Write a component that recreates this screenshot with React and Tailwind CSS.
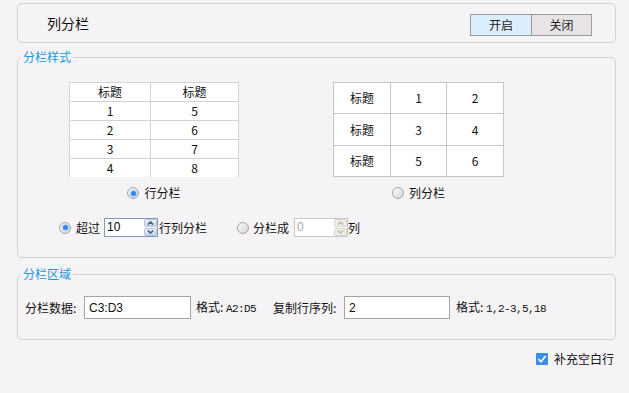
import React from 'react';

const font = { fontFamily: '"Noto Sans CJK SC", "Liberation Sans", sans-serif' };
const mono = { fontFamily: '"Liberation Mono", monospace' };

const Radio = ({ checked }) => (
  <span className="flex h-[12px] w-[12px] shrink-0 items-center justify-center rounded-full border border-[#a4a4a4] bg-linear-to-br from-[#fbfbfb] to-[#d6d6d6]">
    {checked && <span className="h-[5px] w-[5px] rounded-full bg-[#3586ea] shadow-[0_0_2px_1px_#a9cdf7]" />}
  </span>
);

const SpinBtn = ({ up, disabled }) => (
  <div
    className={`flex h-[8px] items-center justify-center rounded-[2px] border ${
      disabled ? 'border-[#d8d6cf] bg-[#eeede8]' : 'border-[#b3c3df] bg-linear-to-b from-[#eef3fc] to-[#c8d6ef]'
    }`}
  >
    <svg width="7" height="4" viewBox="0 0 7 4">
      <path
        d={up ? 'M0.8 3.6 L3.5 0.9 L6.2 3.6' : 'M0.8 0.4 L3.5 3.1 L6.2 0.4'}
        fill="none"
        stroke={disabled ? '#c4c2b8' : '#4a5f86'}
        strokeWidth="1.6"
      />
    </svg>
  </div>
);

const Spin = ({ value, disabled }) => (
  <div className={`flex h-[19px] w-[54px] border bg-white ${disabled ? 'border-[#cbc9bd]' : 'border-[#7f9db9]'}`}>
    <div
      className={`flex-1 pl-[2px] text-[12px] leading-[17px] ${disabled ? 'text-[#a8a8a8]' : 'text-black'}`}
      style={{ fontFamily: '"Liberation Sans", sans-serif' }}
    >
      {value}
    </div>
    <div className="flex w-[13px] flex-col justify-between">
      <SpinBtn up disabled={disabled} />
      <SpinBtn disabled={disabled} />
    </div>
  </div>
);

const Legend = ({ children }) => (
  <legend className="ml-[3px] px-[2px] text-[12px] leading-[16px] text-[#1a99db]">{children}</legend>
);

const RowTable = () => {
  const rows = [['标题', '标题'], ['1', '5'], ['2', '6'], ['3', '7'], ['4', '8']];
  return (
    <div className="w-[170px] border-x border-t border-[#d3d3d3] bg-white">
      {rows.map((r, i) => (
        <div
          key={i}
          className={`flex text-[12px] ${i === rows.length - 1 ? 'h-[18px]' : 'h-[19px] border-b border-[#d3d3d3]'}`}
        >
          <div className="flex w-[81px] items-center justify-center border-r border-[#d3d3d3]">{r[0]}</div>
          <div className="flex flex-1 items-center justify-center">{r[1]}</div>
        </div>
      ))}
    </div>
  );
};

const ColTable = () => {
  const rows = [
    ['1', '2', 'h-[31px]'],
    ['3', '4', 'h-[32px]'],
    ['5', '6', 'h-[31px]'],
  ];
  return (
    <div className="w-[171px] border-l border-t border-[#c6c6c6] bg-white">
      {rows.map((r, i) => (
        <div key={i} className={`flex text-[12px] ${r[2]}`}>
          <div className="flex w-[57px] items-center justify-center border-b border-r border-[#c6c6c6]">标题</div>
          <div className="flex w-[56px] items-center justify-center border-b border-r border-[#c6c6c6]">{r[0]}</div>
          <div className="flex w-[57px] items-center justify-center border-b border-r border-[#c6c6c6]">{r[1]}</div>
        </div>
      ))}
    </div>
  );
};

const App = () => {
  return (
    <div className="flex h-[393px] w-[629px] flex-col bg-[#f6f3f6] pl-[17px] pr-[13px] pt-[3px] text-[#111]" style={font}>
      <div className="flex h-[40px] items-center rounded-[5px] border border-[#d4d0d4] pl-[29px] pr-[23px]">
        <span className="text-[14px]">列分栏</span>
        <div className="ml-auto mt-[3px] flex h-[22px] border border-[#9c9a9c] text-[12px] text-[#222]">
          <div className="flex w-[60px] items-center justify-center bg-[#dbeefd]">开启</div>
          <div className="flex w-[60px] items-center justify-center border-l border-[#9c9a9c] bg-[#e7e3e7]">关闭</div>
        </div>
      </div>

      <fieldset className="mt-[6px] rounded-[5px] border border-[#d4d0d4] pb-[20px]">
        <Legend>分栏样式</Legend>
        <div className="flex gap-[94px] pl-[51px] pt-[17px]">
          <div className="flex w-[170px] flex-col items-center">
            <RowTable />
            <div className="mt-[8px] flex h-[16px] items-center gap-[5px] text-[12px]">
              <Radio checked />
              <span>行分栏</span>
            </div>
          </div>
          <div className="flex w-[171px] flex-col items-center">
            <ColTable />
            <div className="mt-[8px] flex h-[16px] items-center gap-[5px] text-[12px]">
              <Radio />
              <span>列分栏</span>
            </div>
          </div>
        </div>
        <div className="mt-[17px] flex h-[19px] items-center pl-[41px] text-[12px]">
          <Radio checked />
          <span className="ml-[5px] w-[28px]">超过</span>
          <Spin value="10" />
          <span className="ml-px">行列分栏</span>
          <span className="ml-[30px]">
            <Radio />
          </span>
          <span className="ml-[4px] w-[41px]">分栏成</span>
          <Spin value="0" disabled />
          <span>列</span>
        </div>
      </fieldset>

      <fieldset className="mt-[8px] rounded-[5px] border border-[#d4d0d4] pb-[20px]">
        <Legend>分栏区域</Legend>
        <div className="flex items-center pl-[7px] pt-[14px] text-[12px]">
          <span className="w-[59px]">分栏数据:</span>
          <div
            className="flex h-[23px] w-[107px] items-center border border-[#a5a5a5] bg-white pl-[4px] text-[12px]"
            style={{ fontFamily: '"Liberation Sans", sans-serif' }}
          >
            C3:D3
          </div>
          <span className="ml-[5px] w-[77px]">
            格式: <span className="text-[11px] tracking-[-0.6px]" style={mono}>A2:D5</span>
          </span>
          <span className="w-[71px]">复制行序列:</span>
          <div
            className="flex h-[23px] w-[106px] items-center border border-[#a5a5a5] bg-white pl-[4px] text-[12px]"
            style={{ fontFamily: '"Liberation Sans", sans-serif' }}
          >
            2
          </div>
          <span className="ml-[6px]">
            格式: <span className="text-[11px] tracking-[-0.6px]" style={mono}>1,2-3,5,18</span>
          </span>
        </div>
      </fieldset>

      <div className="mr-[2px] mt-[11px] flex h-[16px] items-center justify-end gap-[6px] text-[12px]">
        <span className="flex h-[12px] w-[12px] items-center justify-center rounded-[1px] bg-[#3a8ee9]">
          <svg width="10" height="10" viewBox="0 0 10 10">
            <path d="M1.5 5.2 L4 7.8 L8.6 2" fill="none" stroke="#fff" strokeWidth="1.7" />
          </svg>
        </span>
        <span>补充空白行</span>
      </div>
    </div>
  );
};

export default App;
